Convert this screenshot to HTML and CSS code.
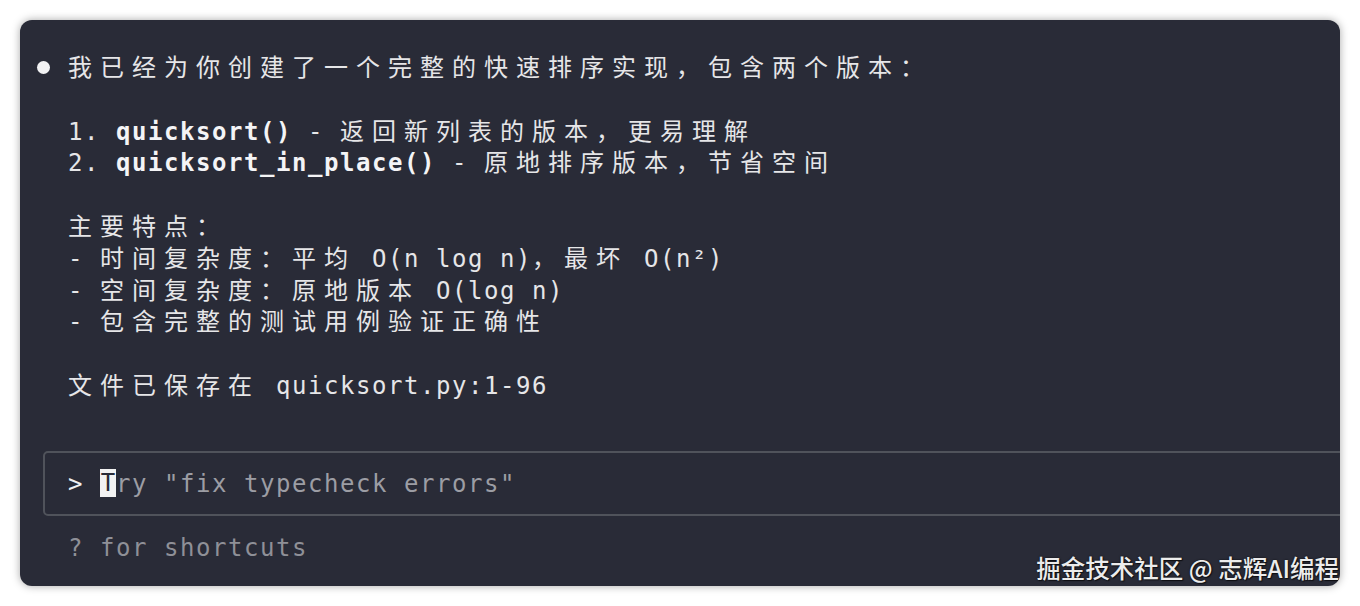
FILE: index.html
```html
<!DOCTYPE html>
<html lang="zh-CN">
<head>
<meta charset="utf-8">
<title>Terminal</title>
<link rel="stylesheet" href="styles.css">
</head>
<body>
<div class="card">
  <div class="ln first"><span class="dot"></span><span class="c">我已经为你创建了一个完整的快速排序实现，包含两个版本：</span></div>
  <div class="ln"></div>
  <div class="ln in">1. <b>quicksort()</b> - <span class="c">返回新列表的版本，更易理解</span></div>
  <div class="ln in">2. <b>quicksort_in_place()</b> - <span class="c">原地排序版本，节省空间</span></div>
  <div class="ln"></div>
  <div class="ln in"><span class="c">主要特点：</span></div>
  <div class="ln in">- <span class="c">时间复杂度：平均</span> O(n log n)<span class="c">，最坏</span> O(n²)</div>
  <div class="ln in">- <span class="c">空间复杂度：原地版本</span> O(log n)</div>
  <div class="ln in">- <span class="c">包含完整的测试用例验证正确性</span></div>
  <div class="ln"></div>
  <div class="ln in"><span class="c">文件已保存在</span> quicksort.py:1-96</div>

  <div class="prompt">
    <div class="ln"><span class="gt">&gt; </span><span class="cursor">T</span><span class="ph">ry "fix typecheck errors"</span></div>
  </div>
  <div class="ln in hint">? for shortcuts</div>

  <div class="watermark">掘金技术社区 @ 志辉AI编程</div>
</div>
</body>
</html>
```

FILE: styles.css
```css
html, body {
  margin: 0;
  padding: 0;
  background: #ffffff;
}

body {
  width: 1360px;
  height: 606px;
  overflow: hidden;
}

.card {
  position: relative;
  box-sizing: border-box;
  margin: 20px;
  width: 1320px;
  height: 566px;
  padding: 30px 0 0 16px;
  background: #292b37;
  border-radius: 12px;
  box-shadow: 0 0 9px rgba(0, 0, 0, 0.35);
  overflow: hidden;
  color: #e6e6e8;
  font-family: "DejaVu Sans Mono", "Noto Sans CJK SC", monospace;
  font-size: 24px;
  letter-spacing: 1.55px;
}

.ln {
  height: 31.8px;
  line-height: 31.8px;
  white-space: pre;
}

.in {
  padding-left: 32px;
}

.c {
  font-family: "Noto Sans CJK SC", sans-serif;
  letter-spacing: 8px;
  font-weight: 400;
}

b {
  font-weight: 700;
  color: #f4f4f6;
}

.dot {
  display: inline-block;
  vertical-align: middle;
  width: 13px;
  height: 13px;
  border-radius: 50%;
  background: #f2f2f4;
  margin: -4px 18px 0 1px;
}

.prompt {
  margin: 51px 0 0 7px;
  width: 1340px;
  box-sizing: border-box;
  border: 2px solid #50535b;
  border-radius: 5px;
  padding: 16px 0 13px 23px;
}

.gt {
  color: #f0f0f2;
}

.cursor {
  display: inline-block;
  vertical-align: middle;
  width: 16px;
  height: 28px;
  line-height: 28px;
  margin-top: -4px;
  background: #f2f2f2;
  color: #292b37;
  letter-spacing: 0;
  text-align: center;
}

.ph {
  color: #9c9da4;
}

.hint {
  margin-top: 17px;
  color: #8f9097;
}

.watermark {
  position: absolute;
  right: 1px;
  bottom: 3px;
  font-family: "Noto Sans CJK SC", sans-serif;
  font-size: 24.5px;
  font-weight: 500;
  letter-spacing: 0;
  line-height: 30px;
  color: #ececec;
  text-shadow: 0 0 2px rgba(0, 0, 0, 0.8), 1px 1px 1px rgba(0, 0, 0, 0.6);
  white-space: nowrap;
}
```
